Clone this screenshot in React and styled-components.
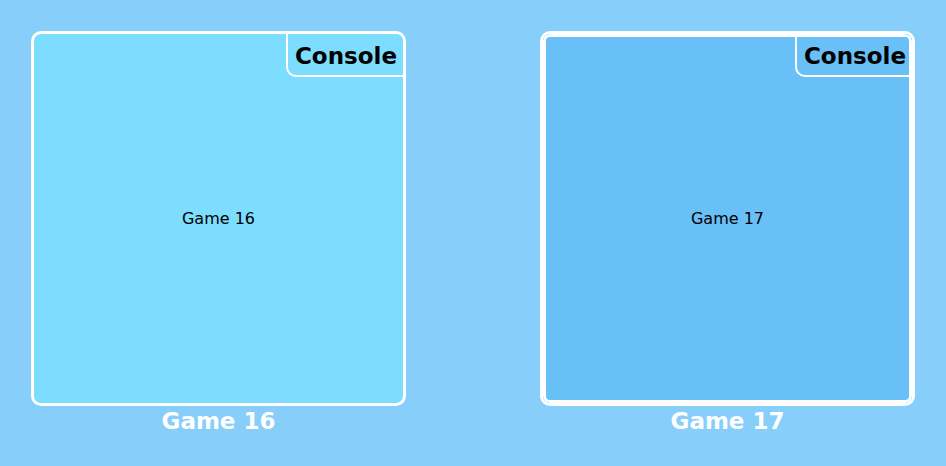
import React from "react";
import styled, { createGlobalStyle, css } from "styled-components";

const Global = createGlobalStyle`
  html, body { margin: 0; padding: 0; }
  body {
    background: #87cefa;
    font-family: "DejaVu Sans", Verdana, sans-serif;
    width: 946px;
    height: 466px;
    overflow: hidden;
  }
`;

const Grid = styled.div`
  display: flex;
  justify-content: space-between;
  padding: 31px;
`;

const Tile = styled.div`
  display: flex;
  flex-direction: column;
  align-items: center;
`;

const Card = styled.div`
  position: relative;
  box-sizing: border-box;
  width: 375px;
  height: 375px;
  border: 3px solid #ffffff;
  border-radius: 10px;
  overflow: hidden;
  background: ${(p) => p.$bg};
  display: flex;
  align-items: center;
  justify-content: center;
  ${(p) =>
    p.$active &&
    css`
      &::after {
        content: "";
        position: absolute;
        inset: 0;
        border: 3px solid #ffffff;
        border-radius: 7px;
        pointer-events: none;
        z-index: 2;
      }
    `}
`;

const Tag = styled.div`
  position: absolute;
  top: 0;
  right: 0;
  background: inherit;
  border-left: 2px solid #ffffff;
  border-bottom: 2px solid #ffffff;
  border-bottom-left-radius: 10px;
  padding: 9px 6px 5px 7px;
  font-size: 23px;
  line-height: 27px;
  font-weight: bold;
  color: #000000;
`;

const Title = styled.div`
  font-size: 16px;
  color: #000000;
`;

const Caption = styled.div`
  margin-top: 2px;
  font-size: 23px;
  line-height: 27px;
  font-weight: bold;
  color: #ffffff;
`;

const games = [
  { name: "Game 16", bg: "#7cddff", active: false },
  { name: "Game 17", bg: "#69c0f7", active: true },
];

export default function App() {
  return (
    <>
      <Global />
      <Grid>
        {games.map((g) => (
          <Tile key={g.name}>
            <Card $bg={g.bg} $active={g.active}>
              <Tag>Console</Tag>
              <Title>{g.name}</Title>
            </Card>
            <Caption>{g.name}</Caption>
          </Tile>
        ))}
      </Grid>
    </>
  );
}
